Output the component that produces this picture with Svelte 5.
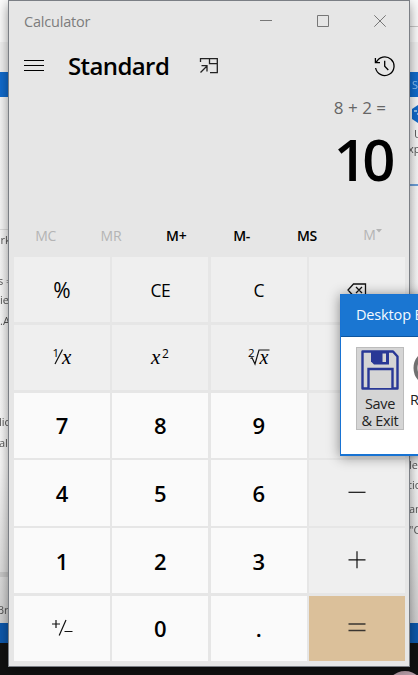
<script>
  const memory = [
    { t: 'MC', off: true }, { t: 'MR', off: true }, { t: 'M+' },
    { t: 'M-' }, { t: 'MS' }, { t: 'M', off: true, list: true }
  ];
  const keys = [
    ['%', 'fn'], ['CE', 'fn'], ['C', 'fn'], ['back', 'fn'],
    ['inv', 'fn'], ['sq', 'fn'], ['root', 'fn'], ['divide', 'fn'],
    ['7', 'num'], ['8', 'num'], ['9', 'num'], ['multiply', 'fn'],
    ['4', 'num'], ['5', 'num'], ['6', 'num'], ['minus', 'fn'],
    ['1', 'num'], ['2', 'num'], ['3', 'num'], ['plus', 'fn'],
    ['sign', 'num'], ['0', 'num'], ['.', 'num'], ['equals', 'eq']
  ];
  const fragments = [
    ['ork', -6, 232], ['s =', -2, 273], ['iew', 0, 292], ['.A', 0, 313],
    ['lic', -1, 414], ['alc', -1, 435], ['Bre', -3, 602],
    ['S', 412, 77, 'light'], ['U', 414, 126], ['xpl', 408, 141],
    ['le', 409, 457], ['tic', 408, 477], ['am', 409, 501], ['"C', 409, 522]
  ];
</script>

<div class="desktop">
  <div class="behind">
    <div class="caption"></div>
    <div class="ribbon"></div>
    <div class="blue"></div>
    <div class="sheet"></div>
    <div class="status"></div>
  </div>
  <div class="lines l1"></div>
  <div class="lines l2"></div>
  <div class="lines l3"></div>
  <div class="lines l4"></div>
  <svg class="hex" width="12" height="24" viewBox="0 0 12 24"><path d="M12 1 L8 3 L2 7 V17 L8 21 L12 23Z" fill="#1169cb" /><path d="M4 9h3M9 9h3M7 12h3" stroke="#b4d6f5" stroke-width="1.5" /></svg>
  {#each fragments as [text, x, y, tone]}
    <span class="fragment {tone ?? ''}" style="left:{x}px;top:{y}px">{text}</span>
  {/each}
  <div class="avatar"></div>

  <main class="calc">
    <header class="title">
      <span>Calculator</span>
      <svg width="134" height="16" viewBox="0 0 134 16" fill="none" stroke="#777">
        <path d="M2 6.500h12M59.500 1.500h11v11h-11zM116.300 1.300l11.400 11.400M127.700 1.300l-11.400 11.400" />
      </svg>
    </header>
    <div class="mode">
      <svg class="menu" width="20" height="12" viewBox="0 0 20 12" stroke="#000"><path d="M0 .5h20M0 5.500h20M0 10.500h20" /></svg>
      <h1>Standard</h1>
      <svg class="top" width="20" height="18" viewBox="0 0 20 18" fill="none" stroke="#222" stroke-width="1.300"><path d="M1.500 5V1.700H18.300V15.700H11M10.500 1.700V6.700H18.300M1.500 15.500L8 9M2.500 8.700H8V14.500" /></svg>
      <svg class="history" width="22" height="22" viewBox="0 0 22 22" fill="none" stroke="#000" stroke-width="1.300"><path d="M2.200 7.500A9.300 9.300 0 1 1 1.600 13M1.400 3V7.700H6M10.700 5.800V11.300L14.300 15" /></svg>
    </div>
    <div class="expression">8 + 2 =</div>
    <div class="result">10</div>
    <div class="memory">
      {#each memory as m}
        <span class:off={m.off} class:list={m.list}>{m.t}{#if m.list}<svg width="6" height="4" viewBox="0 0 6 4"><path d="M0 0h6L3 3.500z" fill="#b4b4b4" /></svg>{/if}</span>
      {/each}
    </div>
    <div class="pad">
      {#each keys as [name, kind]}
        <div class="key {kind}" class:word={name.startsWith('C')} class:percent={name === '%'}>
          {#if name === 'back'}
            <svg width="20" height="14" viewBox="0 0 20 14" fill="none" stroke="#111" stroke-width="1.300"><path d="M6.500 1H18.500V13H6.500L1 7ZM9 4L15 10M15 4L9 10" /></svg>
          {:else if name === 'inv'}
            <svg width="24" height="24" viewBox="0 0 24 24"><text class="small" x="2.500" y="12" font-size="11.500">1</text><path d="M5 19L12.500 4.500" stroke="#111" stroke-width="1.200" /><text class="var" x="12" y="19" font-size="21">x</text></svg>
          {:else if name === 'sq'}
            <svg width="24" height="24" viewBox="0 0 24 24"><text class="var" x="3" y="19" font-size="21">x</text><text class="small" x="14" y="12.500" font-size="12">2</text></svg>
          {:else if name === 'root'}
            <svg width="24" height="24" viewBox="0 0 24 24"><text class="small" x="1" y="12" font-size="11.500">2</text><path d="M3.500 13.500l1.500-.8L8 19L12 5H22.500" fill="none" stroke="#111" stroke-width="1.200" /><text class="var" x="12.500" y="18.500" font-size="20">x</text></svg>
          {:else if name === 'sign'}
            <svg width="24" height="24" viewBox="0 0 24 24" fill="none" stroke="#111" stroke-width="1.200"><path d="M2 8h8M6 4v8M9.200 19.500L16 4M14.500 15.500h8" /></svg>
          {:else if name === 'divide'}
            <svg width="20" height="20" viewBox="0 0 20 20" stroke="#111"><path d="M2 10h16M10 3v2M10 15v2" /></svg>
          {:else if name === 'multiply'}
            <svg width="20" height="20" viewBox="0 0 20 20" stroke="#111"><path d="M4 4l12 12M16 4L4 16" /></svg>
          {:else if name === 'minus'}
            <svg width="20" height="20" viewBox="0 0 20 20" stroke="#111" stroke-width="1.200"><path d="M1.500 9.300h17" /></svg>
          {:else if name === 'plus'}
            <svg width="20" height="20" viewBox="0 0 20 20" stroke="#111" stroke-width="1.200"><path d="M1.500 8.800h17M10 .3v17" /></svg>
          {:else if name === 'equals'}
            <svg width="20" height="20" viewBox="0 0 20 20" stroke="#3a3530" stroke-width="1.300"><path d="M1.500 6h17M1.500 12.500h17" /></svg>
          {:else}{name}{/if}
        </div>
      {/each}
    </div>
  </main>

  <section class="dialog">
    <header>Desktop Editor</header>
    <div class="actions">
      <div class="save">
        <svg width="38" height="40" viewBox="0 0 38 40"><path d="M1.500 1.500H32L36.500 6.500V38.500H1.500Z" fill="#d5d5d5" stroke="#293896" stroke-width="2.400" stroke-linejoin="round" /><path d="M10 1H28V14.500H13L10 11.500Z" fill="#293896" /><path d="M21.500 3.500h3.500v8.500h-3.500z" fill="#d5d5d5" /><path d="M7.500 38V19H31.500V38" fill="#d5d5d5" stroke="#293896" stroke-width="2.400" /></svg>
        <span>Save<br />&amp; Exit</span>
      </div>
      <div class="reset">
        <svg width="42" height="40" viewBox="0 0 42 40" fill="none"><circle cx="19" cy="20" r="16.500" stroke="#707070" stroke-width="4" /></svg>
        <span>Reset</span>
      </div>
    </div>
  </section>
</div>

<style>
  :global(body) { margin: 0; overflow: hidden; }
  .desktop { position: relative; width: 418px; height: 675px; overflow: hidden; background: #111; font-family: "Open Sans", "Noto Sans", sans-serif; }
  .behind { display: flex; flex-direction: column; height: 643px; }
  .caption { height: 42px; background: #fcfcfc; }
  .ribbon { height: 30px; background: #f2f2f2; }
  .blue { height: 25px; background: #126bcd; }
  .sheet { flex: 1; background: linear-gradient(#f7f7f7, #fafafa 70%, #d0d0d0); }
  .status { height: 20px; background: #0d58ac; }
  .lines { position: absolute; height: 1px; background: #c8c8c8; }
  .l1 { left: 409px; right: 0; top: 26px; }
  .l2 { left: 409px; right: 0; top: 184px; height: 2px; background: #6d9fd9; }
  .l3 { left: 0; width: 9px; top: 229px; background: #ddd; }
  .l4 { left: 0; width: 9px; top: 572px; height: 5px; }
  .hex { position: absolute; left: 410px; top: 102px; }
  .fragment { position: absolute; font-size: 11px; line-height: 16px; color: #555; filter: blur(.5px); white-space: nowrap; }
  .light { color: #8fc3f5; }
  .avatar { position: absolute; left: 386px; top: 671px; width: 38px; height: 38px; border-radius: 50%; background: #baa0aa; }

  .calc { position: absolute; left: 9px; top: 1px; width: 400px; height: 665px; display: flex; flex-direction: column; background: #e6e6e6; box-shadow: 0 0 0 1px #7b7f85, 0 3px 12px rgba(0,0,0,.5); }
  .title { height: 41px; display: flex; align-items: center; justify-content: space-between; padding: 0 14px 0 15px; font-size: 14.500px; color: #7c7c7c; letter-spacing: -.2px; }
  .title svg { margin-right: 3px; }
  .mode { height: 48px; display: flex; align-items: center; padding: 0 13px 0 15px; }
  h1 { margin: 0 0 0 24px; width: 131px; font-size: 24px; line-height: 30px; font-weight: 600; letter-spacing: -.6px; }
  .history { margin-left: auto; }
  .expression { height: 34px; line-height: 35px; text-align: right; padding-right: 23px; font-size: 17px; color: #666; }
  .result { height: 76px; line-height: 70px; text-align: right; padding-right: 18px; font-size: 58px; font-weight: 600; letter-spacing: -4.500px; }
  .memory { height: 57px; display: grid; grid-template-columns: repeat(6, 1fr); padding: 13px 4px 0; box-sizing: border-box; align-items: center; text-align: center; font-size: 14px; font-weight: 600; letter-spacing: -.2px; }
  .memory .off { color: #b4b4b4; font-weight: 400; }
  .memory .list { position: relative; top: -1px; }
  .memory svg { vertical-align: 7px; }
  .pad { height: 404px; margin: 0 4px 0 5px; display: grid; grid-template-columns: repeat(4, 1fr); grid-template-rows: repeat(6, 1fr); gap: 2.500px; }
  .key { display: flex; align-items: center; justify-content: center; background: #efefef; font-size: 22px; min-height: 0; }
  .num { background: #fafafa; font-weight: 600; }
  .eq { background: #dbc09a; }
  .word { font-size: 17.500px; letter-spacing: -.6px; padding-top: 1px; }
  .percent { font-size: 21px; font-weight: 400; }
  .small { font-family: "Open Sans", sans-serif; font-weight: 400; }
  .var { font-family: "Liberation Serif", serif; font-style: italic; }

  .dialog { position: absolute; left: 340px; top: 294px; width: 140px; height: 162px; box-sizing: border-box; border: 1px solid #1873d3; border-bottom-width: 2px; background: #fff; box-shadow: 0 1px 12px rgba(0,0,0,.45); }
  .dialog header { height: 42px; box-sizing: border-box; padding-left: 15px; line-height: 40px; border-bottom: 1px solid #0d559e; background: #1a76d2; color: #f4faff; font-size: 14.500px; letter-spacing: -.15px; white-space: nowrap; }
  .actions { display: flex; padding: 10px 0 0 15px; gap: 6px; }
  .save { width: 48px; height: 83px; box-sizing: border-box; border: 1px solid #bcbcbc; background: #d5d5d5; }
  .save svg, .reset svg { display: block; margin: 2px auto 0 4px; }
  .save span, .reset span { display: block; text-align: center; font-size: 14.500px; line-height: 17px; letter-spacing: -.3px; margin-top: 5px; white-space: nowrap; color: #222; }
  .reset svg { margin: 1px 0 0 3px; }
  .reset span { margin-top: 3px; text-align: left; }
</style>
